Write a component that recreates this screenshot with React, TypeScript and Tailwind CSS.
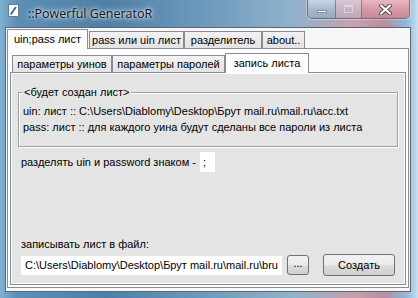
import React from 'react';

const UI = { fontFamily: '"Liberation Sans", Tahoma, Arial, sans-serif' };

function Tab({ label, w, active }: { label: string; w: string; active?: boolean }) {
  return active ? (
    <div
      className={`${w} h-[20px] -mb-px relative z-10 flex items-center justify-center border border-b-0 border-[#898c95] bg-[#fcfcfc] text-[11px] text-black`}
    >
      {label}
    </div>
  ) : (
    <div
      className={`${w} h-[17px] flex items-center justify-center border border-b-0 border-[#898c95] bg-[linear-gradient(#f2f2f2,#e3e3e3)] text-[11px] text-black`}
    >
      {label}
    </div>
  );
}

function CaptionButtons() {
  return (
    <div className="flex h-[19px] rounded-b-[5px] border border-t-0 border-[#3b4a5a]/60 overflow-hidden shadow-[0_0_0_1px_rgba(255,255,255,0.35)]">
      <div className="w-[28px] flex items-center justify-center bg-[linear-gradient(#c9d7e4,#a9bccd_50%,#93aabf)] border-r border-[#3b4a5a]/50">
        <div className="w-[10px] h-[3px] mt-[5px] bg-white border border-[#4d5d6d]/70" />
      </div>
      <div className="w-[26px] flex items-center justify-center bg-[linear-gradient(#d9c8d2,#c7b4c3_50%,#bda6b8)] border-r border-[#3b4a5a]/50">
        <div className="w-[9px] h-[8px] border border-white/70 border-t-2 opacity-60" />
      </div>
      <div className="w-[47px] flex items-center justify-center bg-[linear-gradient(#e9b9c0,#d79aa6_50%,#c88795)]">
        <svg width="13" height="11" viewBox="0 0 13 11">
          <path d="M2 1.5 L11 9.5 M11 1.5 L2 9.5" stroke="#4a4a4a" strokeWidth="4" strokeLinecap="round" />
          <path d="M2 1.5 L11 9.5 M11 1.5 L2 9.5" stroke="#ffffff" strokeWidth="2.2" strokeLinecap="round" />
        </svg>
      </div>
    </div>
  );
}

export default function App() {
  return (
    <div
      className="w-[418px] h-[298px] relative overflow-hidden bg-[linear-gradient(90deg,#7fb0d6_0%,#5d8fb6_4%,#4f7fa6_25%,#6f9bbd_50%,#8fb2cc_70%,#c8a0ae_85%,#b98ea0_92%,#8db7d8_97%,#c6def0_100%)]"
      style={UI}
    >
      {/* ── Title bar ── */}
      <div className="h-[28px] flex items-start pl-[8px] pr-[8px]">
        <div className="mt-[4px] w-[11px] h-[13px] bg-white border border-[#6c7a88] flex items-end justify-center">
          <svg width="9" height="11" viewBox="0 0 9 11">
            <path d="M2 9 L7 2" stroke="#2f6fb5" strokeWidth="2" />
            <path d="M1.5 10 L2.5 8.5" stroke="#333" strokeWidth="1" />
          </svg>
        </div>
        <span
          className="ml-[9px] mt-[5px] text-[#111] [text-shadow:0_0_6px_#fff,0_0_3px_#fff]"
          style={{ fontFamily: '"Open Sans", "Liberation Sans", sans-serif', fontSize: 12.5 }}
        >
          ::Powerful GeneratoR
        </span>
        <div className="ml-auto">
          <CaptionButtons />
        </div>
      </div>

      {/* ── Client area ── */}
      <div className="absolute left-[5px] top-[27px] w-[406px] h-[265px] border border-[#5c6670] bg-[#f7f7f7] px-[1px]">
        {/* outer tabs */}
        <div className="flex items-end h-[20px]">
          <Tab label="uin;pass лист" w="w-[81px]" active />
          <div className="w-[1px]" />
          <Tab label="pass или uin лист" w="w-[95px]" />
          <Tab label="разделитель" w="w-[78px]" />
          <Tab label="about.." w="w-[43px]" />
        </div>

        {/* outer tab page */}
        <div className="h-[240px] border border-[#898c95] bg-[#fcfcfc] px-[2px] pt-[3px]">
          {/* inner tabs */}
          <div className="flex items-end h-[20px] pl-[2px]">
            <Tab label="параметры уинов" w="w-[100px]" />
            <Tab label="параметры паролей" w="w-[113px]" />
            <Tab label="запись листа" w="w-[84px]" active />
          </div>

          {/* inner tab page */}
          <div className="h-[213px] border border-[#898c95] bg-[#fcfcfc] p-[1px]">
            <div className="h-full bg-[#e4e4e4] flex flex-col px-[6px] text-[11px] text-black">
              {/* group box */}
              <div className="relative mt-[18px] h-[55px] border border-[#a0a0a0] shadow-[inset_1px_1px_0_#fff,1px_1px_0_#fff] pl-[4px] pt-[10px]">
                <span className="absolute left-[4px] -top-[7px] bg-[#e4e4e4] px-[1px] leading-[13px]">
                  {'<будет создан лист>'}
                </span>
                <div className="leading-[16px]">uin: лист :: C:\Users\Diablomy\Desktop\Брут mail.ru\mail.ru\acc.txt</div>
                <div className="leading-[16px]">pass: лист :: для каждого уина будут сделаны все пароли из листа</div>
              </div>

              <div className="mt-[5px] flex items-center h-[20px] pl-[3px]">
                <span>разделять uin и password знаком -</span>
                <div className="ml-[4px] w-[15px] h-[20px] bg-white pl-[3px] flex items-center">;</div>
              </div>

              <div className="mt-[66px] pl-[3px] leading-[13px]">записывать лист в файл:</div>
              <div className="mt-[3px] flex items-center pl-[3px]">
                <div className="w-[261px] h-[19px] bg-white flex items-center pl-[4px] overflow-hidden whitespace-nowrap text-[11px]">
                  C:\Users\Diablomy\Desktop\Брут mail.ru\mail.ru\bru
                </div>
                <div className="ml-[5px] w-[22px] h-[20px] rounded-[3px] border border-[#707070] bg-[linear-gradient(#f2f2f2,#ebebeb_50%,#dddddd_51%,#cfcfcf)] flex items-center justify-center text-[11px] leading-none pb-[3px]">
                  ...
                </div>
                <div className="ml-[14px] w-[72px] h-[22px] rounded-[3px] border border-[#707070] bg-[linear-gradient(#f2f2f2,#ebebeb_50%,#dddddd_51%,#cfcfcf)] flex items-center justify-center">
                  Создать
                </div>
              </div>
            </div>
          </div>
        </div>
      </div>
    </div>
  );
}
